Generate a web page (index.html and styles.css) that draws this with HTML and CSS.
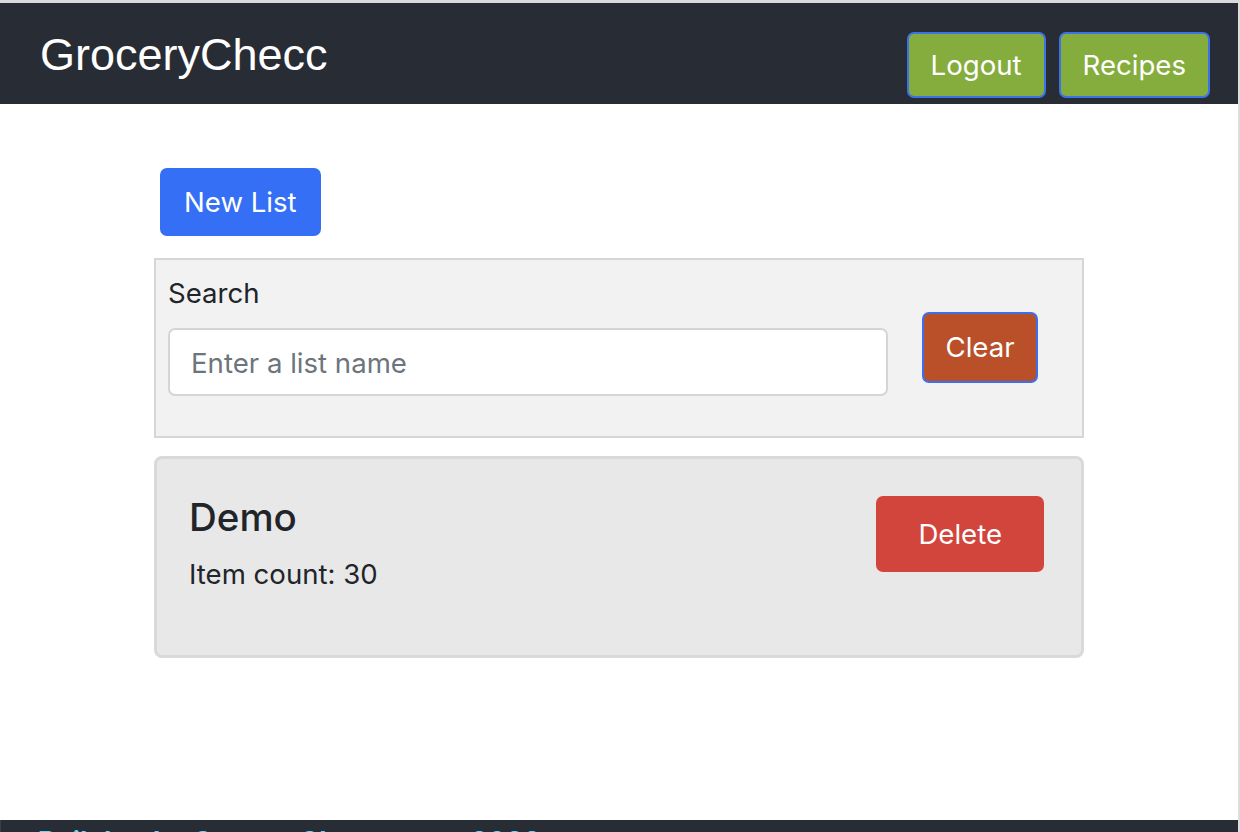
FILE: index.html
```html
<!DOCTYPE html>
<html lang="en">
<head>
<meta charset="utf-8">
<title>GroceryChecc</title>
<link rel="stylesheet" href="styles.css">
</head>
<body>
<div class="page">
  <header class="topbar">
    <div class="brand">GroceryChecc</div>
    <nav class="nav-actions">
      <button class="btn btn-green">Logout</button>
      <button class="btn btn-green">Recipes</button>
    </nav>
  </header>
  <main class="main">
    <div class="container">
      <div class="new-row">
        <button class="btn btn-primary">New List</button>
      </div>
      <section class="search-box">
        <div class="search-field">
          <label class="search-label" for="q">Search</label>
          <input id="q" class="search-input" type="text" placeholder="Enter a list name">
        </div>
        <button class="btn btn-clear">Clear</button>
      </section>
      <article class="list-card">
        <div class="list-info">
          <h3 class="list-title">Demo</h3>
          <p class="list-count">Item count: 30</p>
        </div>
        <button class="btn btn-danger">Delete</button>
      </article>
    </div>
  </main>
  <footer class="footer">
    <span class="footer-text">Built by the GroceryChecc team, 2023</span>
  </footer>
</div>
</body>
</html>
```

FILE: styles.css
```css
* { box-sizing: border-box; }

html, body {
  margin: 0;
  padding: 0;
  height: 832px;
  overflow: hidden;
  background: #ffffff;
}

body {
  font-family: Inter, "Noto Sans", "Liberation Sans", sans-serif;
  font-size: 27.6px;
  line-height: 42.75px;
  color: #212529;
}

.page {
  border-top: 3px solid #dadada;
  border-right: 2px solid #dcdcdc;
  height: 832px;
  overflow: hidden;
}

.topbar {
  height: 101px;
  background: #282c34;
  display: flex;
  justify-content: space-between;
  align-items: flex-start;
  padding: 29px 28px 0 40px;
}

.brand {
  font-family: "Liberation Sans", Arial, sans-serif;
  font-size: 45px;
  line-height: 1;
  color: #ffffff;
}

.nav-actions {
  display: flex;
  gap: 13px;
}

.btn {
  font-family: inherit;
  font-size: 27.6px;
  line-height: 42.75px;
  color: #ffffff;
  border-radius: 7px;
  cursor: pointer;
}

.btn-green {
  background: #85ad3e;
  border: 2px solid #3b72ea;
  padding: 9.5px 22px;
}

.main {
  height: 716px;
}

.container {
  width: 930px;
  margin-left: 154px;
}

.new-row {
  padding: 64px 0 22px 6px;
}

.btn-primary {
  background: #356ff5;
  border: 2px solid #356ff5;
  padding: 10.5px 22px;
}

.search-box {
  background: #f2f2f2;
  border: 2px solid #d6d6d6;
  padding: 12px;
  display: flex;
  align-items: center;
}

.search-field {
  width: 720px;
  display: flex;
  flex-direction: column;
  padding-bottom: 28px;
}

.search-label {
  display: block;
  margin-bottom: 13px;
  padding-top: 0;
}

.search-input {
  height: 68px;
  width: 720px;
  font-family: inherit;
  font-size: 27.6px;
  color: #212529;
  background: #ffffff;
  border: 2px solid #d2d5d9;
  border-radius: 7px;
  padding: 3px 21px 0;
}

.search-input::placeholder {
  color: #6c757d;
}

.btn-clear {
  margin-left: 34px;
  background: #b95029;
  border: 2px solid #3a6ff0;
  padding: 12px 21.5px;
}

.list-card {
  margin-top: 18px;
  height: 202px;
  background: #e8e8e8;
  border: 3px solid #d9d9d9;
  border-radius: 8px;
  padding: 34.5px 37px 0 32px;
  display: flex;
  justify-content: space-between;
  align-items: flex-start;
}

.list-title {
  margin: 0 0 12px 0;
  font-size: 38.5px;
  line-height: 48px;
  font-weight: 500;
}

.list-count {
  margin: 0;
}

.btn-danger {
  margin-top: 2.5px;
  background: #d2453d;
  border: 0;
  padding: 17px 42px 16.5px;
}

.footer {
  background: #282c34;
  height: 60px;
  padding: 0 37px;
  border-left: 1px solid #3a3e46;
}

.footer-text {
  font-size: 27px;
  line-height: 1.2;
  font-weight: 700;
  color: #61dafb;
}
```
